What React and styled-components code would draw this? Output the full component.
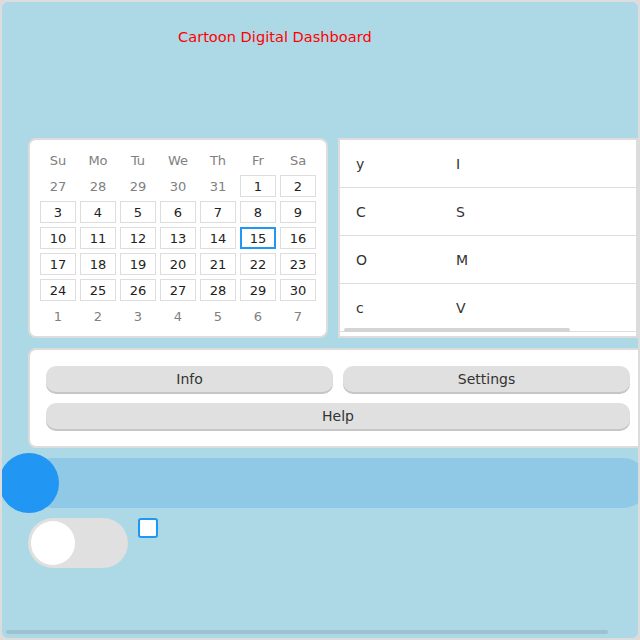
import React from "react";
import styled, { createGlobalStyle } from "styled-components";

const GlobalStyle = createGlobalStyle`
  html, body {
    margin: 0;
    padding: 0;
    background: #dcdcdc;
  }
  body {
    font-family: "DejaVu Sans", "Liberation Sans", sans-serif;
  }
`;

const Frame = styled.div`
  position: relative;
  width: 640px;
  height: 640px;
  box-sizing: border-box;
  border: 2px solid #dcdcdc;
  border-radius: 8px;
  background: #add8e6;
  padding: 0 26px;
  display: flex;
  flex-direction: column;
  gap: 10px;
  overflow: hidden;
`;

// scroll indicator drawn over the content (the browser hides real scrollbars)
const ScrollThumb = styled.div`
  position: absolute;
  left: ${(props) => props.$left}px;
  top: ${(props) => props.$top}px;
  width: ${(props) => props.$width}px;
  height: 4px;
  border-radius: 2px;
  background: ${(props) => props.$color};
`;

const Header = styled.header`
  height: 126px;
  flex-shrink: 0;
  padding: 26px 0 0 150px;
  box-sizing: border-box;
`;

const Title = styled.h1`
  margin: 0;
  font-size: 14.6px;
  font-weight: 400;
  line-height: 17px;
  color: #ff0000;
  white-space: nowrap;
`;

const TopRow = styled.div`
  display: flex;
  gap: 10px;
  width: 610px;
  flex-shrink: 0;
`;

const Card = styled.div`
  background: #fff;
  border: 2px solid #dcdcdc;
  border-radius: ${(props) => (props.$square ? 0 : 8)}px;
  box-sizing: border-box;
  flex-shrink: 0;
`;

const CalendarCard = styled(Card)`
  width: 300px;
  height: 200px;
  padding: 9px 10px;
`;

const CalGrid = styled.div`
  display: grid;
  grid-template-columns: repeat(7, 36px);
  grid-auto-rows: 22px;
  gap: 4px;
`;

const DayName = styled.div`
  display: flex;
  align-items: center;
  justify-content: center;
  font-size: 13px;
  color: #808080;
`;

const Day = styled.div`
  display: flex;
  align-items: center;
  justify-content: center;
  box-sizing: border-box;
  font-size: 13px;
  color: ${(props) => (props.$muted ? "#808080" : "#222")};
  border: ${(props) =>
    props.$muted ? "none" : props.$selected ? "2px solid #2196f3" : "1px solid #dddddd"};
`;

const ListCard = styled(Card)`
  position: relative;
  width: 300px;
  height: 200px;
  overflow: hidden;
`;

const ListTable = styled.div`
  width: 384px;
`;

const ListRow = styled.div`
  display: flex;
  align-items: center;
  height: 47px;
  border-bottom: 1px solid #dddddd;
`;

const ListCell = styled.div`
  width: 100px;
  padding-left: 16px;
  box-sizing: border-box;
  font-size: 14px;
  color: #333;
`;

const ButtonCard = styled(Card)`
  width: 620px;
  height: 100px;
  padding: 16px;
  display: grid;
  grid-template-columns: 1fr 1fr;
  grid-template-rows: 26px 26px;
  gap: 11px 10px;
`;

const Button = styled.button`
  grid-column: ${(props) => (props.$wide ? "1 / -1" : "auto")};
  height: 26px;
  border: none;
  border-radius: 10px;
  background: #e0e0e0;
  box-shadow: 0 2px 0 #c6c6c6;
  font-family: "DejaVu Sans", sans-serif;
  font-size: 14px;
  color: #333;
  padding: 0;
  cursor: pointer;
`;

const SliderWrap = styled.div`
  position: relative;
  width: 620px;
  height: 50px;
  flex-shrink: 0;
`;

const SliderTrack = styled.div`
  height: 100%;
  border-radius: 25px;
  background: #8fc9e6;
`;

const SliderThumb = styled.div`
  position: absolute;
  left: -29px;
  top: -5px;
  width: 60px;
  height: 60px;
  border-radius: 50%;
  background: #2196f3;
`;

const ControlRow = styled.div`
  display: flex;
  align-items: flex-start;
  gap: 10px;
  flex-shrink: 0;
`;

const Toggle = styled.div`
  width: 100px;
  height: 50px;
  box-sizing: border-box;
  padding: 3px;
  border-radius: 25px;
  background: #e0e0e0;
`;

const Knob = styled.div`
  width: 44px;
  height: 44px;
  border-radius: 50%;
  background: #fff;
`;

const Check = styled.input`
  appearance: none;
  margin: 0;
  width: 20px;
  height: 20px;
  box-sizing: border-box;
  border: 2px solid #2196f3;
  border-radius: 3px;
  background: #fff;
`;

const dayNames = ["Su", "Mo", "Tu", "We", "Th", "Fr", "Sa"];

const days = [
  ...[27, 28, 29, 30, 31].map((d) => ({ d, muted: true })),
  ...Array.from({ length: 30 }, (_, i) => ({ d: i + 1 })),
  ...[1, 2, 3, 4, 5, 6, 7].map((d) => ({ d, muted: true })),
];

const rows = [
  ["y", "I"],
  ["C", "S"],
  ["O", "M"],
  ["c", "V"],
];

const App = () => {
  return (
    <>
      <GlobalStyle />
      <Frame>
        <Header>
          <Title>Cartoon Digital Dashboard</Title>
        </Header>
        <TopRow>
          <CalendarCard>
            <CalGrid>
              {dayNames.map((n) => (
                <DayName key={n}>{n}</DayName>
              ))}
              {days.map((item, i) => (
                <Day key={i} $muted={item.muted} $selected={!item.muted && item.d === 15}>
                  {item.d}
                </Day>
              ))}
            </CalGrid>
          </CalendarCard>
          <ListCard $square>
            <ListTable>
              {rows.map((r, i) => (
                <ListRow key={i}>
                  <ListCell>{r[0]}</ListCell>
                  <ListCell>{r[1]}</ListCell>
                </ListRow>
              ))}
            </ListTable>
            <ScrollThumb $left={4} $top={188} $width={226} $color="#d4d4d4" />
          </ListCard>
        </TopRow>
        <ButtonCard>
          <Button>Info</Button>
          <Button>Settings</Button>
          <Button $wide>Help</Button>
        </ButtonCard>
        <SliderWrap>
          <SliderTrack />
          <SliderThumb />
        </SliderWrap>
        <ControlRow>
          <Toggle>
            <Knob />
          </Toggle>
          <Check type="checkbox" readOnly />
        </ControlRow>
        <ScrollThumb $left={4} $top={628} $width={602} $color="rgba(0, 0, 0, 0.1)" />
      </Frame>
    </>
  );
};

export default App;
